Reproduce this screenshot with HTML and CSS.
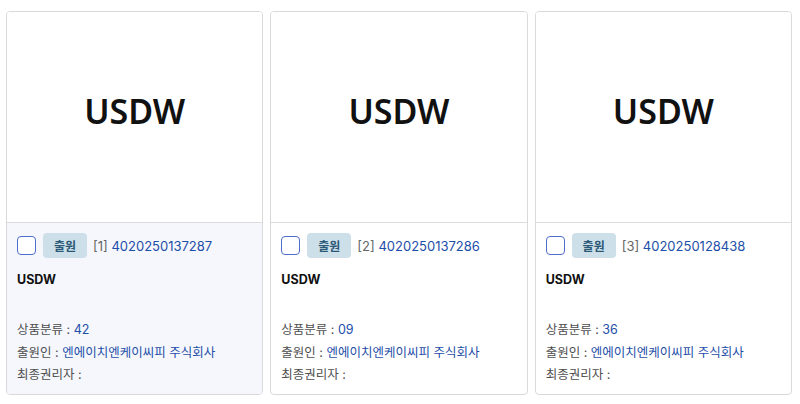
FILE: index.html
```html
<!DOCTYPE html>
<html lang="ko">
<head>
<meta charset="utf-8">
<link rel="stylesheet" href="styles.css">
</head>
<body>
<div class="grid">
  <div class="card active">
    <div class="thumb"><span class="mark">USDW</span></div>
    <div class="body">
      <div class="head">
        <span class="check"></span>
        <span class="badge">출원</span>
        <span class="no"><span class="idx">[1]</span> 4020250137287</span>
      </div>
      <div class="title">USDW</div>
      <div class="info">
        <div class="row">상품분류 : <span class="val">42</span></div>
        <div class="row">출원인 : <span class="val">엔에이치엔케이씨피 주식회사</span></div>
        <div class="row">최종권리자 :</div>
      </div>
    </div>
  </div>
  <div class="card">
    <div class="thumb"><span class="mark">USDW</span></div>
    <div class="body">
      <div class="head">
        <span class="check"></span>
        <span class="badge">출원</span>
        <span class="no"><span class="idx">[2]</span> 4020250137286</span>
      </div>
      <div class="title">USDW</div>
      <div class="info">
        <div class="row">상품분류 : <span class="val">09</span></div>
        <div class="row">출원인 : <span class="val">엔에이치엔케이씨피 주식회사</span></div>
        <div class="row">최종권리자 :</div>
      </div>
    </div>
  </div>
  <div class="card">
    <div class="thumb"><span class="mark">USDW</span></div>
    <div class="body">
      <div class="head">
        <span class="check"></span>
        <span class="badge">출원</span>
        <span class="no"><span class="idx">[3]</span> 4020250128438</span>
      </div>
      <div class="title">USDW</div>
      <div class="info">
        <div class="row">상품분류 : <span class="val">36</span></div>
        <div class="row">출원인 : <span class="val">엔에이치엔케이씨피 주식회사</span></div>
        <div class="row">최종권리자 :</div>
      </div>
    </div>
  </div>
</div>
</body>
</html>
```
FILE: styles.css
```css
* { box-sizing: border-box; }
html, body { margin: 0; padding: 0; background: #fff; }
body {
  font-family: Inter, "Noto Sans CJK KR", sans-serif;
  color: #222;
}
.grid {
  display: grid;
  grid-template-columns: repeat(3, 1fr);
  gap: 7px;
  padding: 11px 8px 0 6px;
}
.card {
  border: 1px solid #d9d9d9;
  border-radius: 4px;
  overflow: hidden;
  height: 384px;
  display: flex;
  flex-direction: column;
  background: #fff;
}
.card.active .body { background: #f5f7fc; }
.thumb {
  height: 211px;
  border-bottom: 1px solid #dcdcdc;
  display: flex;
  align-items: center;
  justify-content: center;
  background: #fff;
}
.mark {
  font-family: "Noto Sans", "Open Sans", sans-serif;
  font-weight: 600;
  font-size: 34px;
  color: #111;
  letter-spacing: 0;
  margin-top: -12px;
}
.body {
  flex: 1;
  padding: 10px 10px 0 10px;
}
.head {
  display: flex;
  align-items: center;
  height: 25px;
}
.check {
  width: 19px;
  height: 19px;
  border: 1.5px solid #4d6fc9;
  border-radius: 4px;
  background: #fff;
  margin-right: 7px;
}
.badge {
  background: #cde0ea;
  color: #2b5876;
  font-weight: 600;
  font-size: 12px;
  border-radius: 4px;
  width: 44px;
  height: 25px;
  display: inline-flex;
  align-items: center;
  justify-content: center;
  margin-right: 6px;
}
.no {
  font-size: 13px;
  color: #1d4ea8;
}
.idx { color: #666; }
.title {
  margin-top: 12px;
  font-size: 12.5px;
  font-weight: 700;
  color: #111;
  height: 20px;
  line-height: 20px;
}
.info { margin-top: 29px; }
.row {
  font-size: 12.5px;
  color: #4e4e4e;
  line-height: 22.5px;
}
.val { color: #1d4ea8; }
```
